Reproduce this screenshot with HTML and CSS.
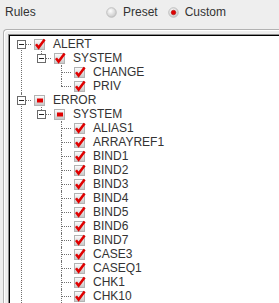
FILE: index.html
```html
<!DOCTYPE html>
<html lang="en">
<head>
  <meta charset="UTF-8" />
  <title>Rules</title>
  <link rel="stylesheet" href="styles.css">
</head>
<body>

  <svg class="defs" width="0" height="0">
    <defs>
      <linearGradient id="boxFill" x1="0" y1="0" x2="0" y2="1">
        <stop offset="0" stop-color="#fefefe"/>
        <stop offset="1" stop-color="#c6c6c6"/>
      </linearGradient>
      <radialGradient id="radioFill" cx="0.4" cy="0.35" r="0.7">
        <stop offset="0" stop-color="#ffffff"/>
        <stop offset="1" stop-color="#c4c4c4"/>
      </radialGradient>
      <symbol id="box" viewBox="0 0 12 12">
        <rect x="0.5" y="1.5" width="10" height="10" fill="url(#boxFill)" stroke="#b3b3b3"/>
      </symbol>
      <symbol id="chk" viewBox="0 0 12 12">
        <use href="#box"/>
        <path d="M2 6.2 L4.6 9.6 L10.6 1.6" fill="none" stroke="#e00000" stroke-width="2.5"/>
      </symbol>
      <symbol id="part" viewBox="0 0 12 12">
        <use href="#box"/>
        <rect x="3" y="4.5" width="6" height="4" fill="#e00000"/>
      </symbol>
      <symbol id="radio" viewBox="0 0 11 11">
        <circle cx="5.5" cy="5.5" r="4.8" fill="url(#radioFill)" stroke="#b8b8b8" stroke-width="0.8"/>
      </symbol>
      <symbol id="radioOn" viewBox="0 0 11 11">
        <use href="#radio"/>
        <circle cx="5.5" cy="5.5" r="2.3" fill="#e00000" stroke="#900" stroke-width="0.5"/>
      </symbol>
    </defs>
  </svg>

  <div class="header">
    <span class="title">Rules</span>
    <label class="radio"><svg><use href="#radio"/></svg>Preset</label>
    <label class="radio"><svg><use href="#radioOn"/></svg>Custom</label>
  </div>

  <div class="group">
    <div class="scroll">
      <ul class="tree">
        <li>
          <div class="row"><span class="handle"><span class="toggle"></span></span><svg class="cb"><use href="#chk"/></svg><span class="name">ALERT</span></div>
          <ul>
            <li>
              <div class="row"><span class="handle"><span class="toggle"></span></span><svg class="cb"><use href="#chk"/></svg><span class="name">SYSTEM</span></div>
              <ul>
                <li><div class="row"><span class="handle"></span><svg class="cb"><use href="#chk"/></svg><span class="name">CHANGE</span></div></li>
                <li><div class="row"><span class="handle"></span><svg class="cb"><use href="#chk"/></svg><span class="name">PRIV</span></div></li>
              </ul>
            </li>
          </ul>
        </li>
        <!-- more root nodes follow below the visible area -->
        <li class="more">
          <div class="row"><span class="handle"><span class="toggle"></span></span><svg class="cb"><use href="#part"/></svg><span class="name">ERROR</span></div>
          <ul>
            <li>
              <div class="row"><span class="handle"><span class="toggle"></span></span><svg class="cb"><use href="#part"/></svg><span class="name">SYSTEM</span></div>
              <ul>
                <li><div class="row"><span class="handle"></span><svg class="cb"><use href="#chk"/></svg><span class="name">ALIAS1</span></div></li>
                <li><div class="row"><span class="handle"></span><svg class="cb"><use href="#chk"/></svg><span class="name">ARRAYREF1</span></div></li>
                <li><div class="row"><span class="handle"></span><svg class="cb"><use href="#chk"/></svg><span class="name">BIND1</span></div></li>
                <li><div class="row"><span class="handle"></span><svg class="cb"><use href="#chk"/></svg><span class="name">BIND2</span></div></li>
                <li><div class="row"><span class="handle"></span><svg class="cb"><use href="#chk"/></svg><span class="name">BIND3</span></div></li>
                <li><div class="row"><span class="handle"></span><svg class="cb"><use href="#chk"/></svg><span class="name">BIND4</span></div></li>
                <li><div class="row"><span class="handle"></span><svg class="cb"><use href="#chk"/></svg><span class="name">BIND5</span></div></li>
                <li><div class="row"><span class="handle"></span><svg class="cb"><use href="#chk"/></svg><span class="name">BIND6</span></div></li>
                <li><div class="row"><span class="handle"></span><svg class="cb"><use href="#chk"/></svg><span class="name">BIND7</span></div></li>
                <li><div class="row"><span class="handle"></span><svg class="cb"><use href="#chk"/></svg><span class="name">CASE3</span></div></li>
                <li><div class="row"><span class="handle"></span><svg class="cb"><use href="#chk"/></svg><span class="name">CASEQ1</span></div></li>
                <li><div class="row"><span class="handle"></span><svg class="cb"><use href="#chk"/></svg><span class="name">CHK1</span></div></li>
                <li class="more"><div class="row"><span class="handle"></span><svg class="cb"><use href="#chk"/></svg><span class="name">CHK10</span></div></li>
              </ul>
            </li>
          </ul>
        </li>
      </ul>
    </div>
  </div>

</body>
</html>
```

FILE: styles.css
```css
html, body {
  overflow: hidden;
}
body {
  margin: 0;
  background-color: #eeeeee;
  font-family: "Liberation Sans", Arial, sans-serif;
  font-size: 12px;
  color: #333;
}
.defs {
  position: absolute;
}
.header {
  display: flex;
  align-items: center;
  height: 24px;
  padding-left: 5px;
}
.title {
  width: 101px;
}
.radio {
  display: flex;
  align-items: center;
  margin-right: 10px;
}
.radio svg {
  width: 11px;
  height: 11px;
  margin-right: 6px;
}
.group {
  margin: 5px -6px 0 3px;
  padding: 4px 0 0 4px;
  border: 1px solid #b2b2b2;
  border-bottom: none;
  border-right: none;
  border-radius: 4px 0 0 0;
  box-shadow: inset 1px 1px #fff;
}
.scroll {
  height: 267px;
  overflow: hidden;
  background-color: #fff;
  border-top: 1px solid #8e8e8e;
  border-left: 1px solid #8e8e8e;
  box-shadow: inset 1px 1px #000;
  padding: 2px 0 0 2px;
}
.tree, .tree ul {
  list-style: none;
  margin: 0;
  padding: 0;
}
.tree ul {
  padding-left: 20px;
}
.tree li {
  position: relative;
}
.tree li::before {
  content: "";
  position: absolute;
  left: 10px;
  top: 0;
  bottom: 0;
  border-left: 1px dotted #707070;
}
.tree li:last-child::before {
  bottom: auto;
  height: 7px;
}
.tree li.more::before {
  height: auto;
  bottom: 0;
}
.tree > li:first-child::before {
  top: 7px;
}
.row {
  display: flex;
  align-items: center;
  height: 14px;
  white-space: nowrap;
}
.handle {
  position: relative;
  flex: none;
  width: 20px;
  height: 14px;
}
.handle::before {
  content: "";
  position: absolute;
  left: 10px;
  top: 7px;
  width: 10px;
  border-top: 1px dotted #707070;
}
.toggle {
  position: absolute;
  left: 6px;
  top: 3px;
  width: 7px;
  height: 7px;
  border: 1px solid #6a6a6a;
  background-color: #fff;
}
.toggle::after {
  content: "";
  position: absolute;
  left: 1px;
  top: 3px;
  width: 5px;
  height: 1px;
  background-color: #222;
}
.cb {
  flex: none;
  width: 12px;
  height: 12px;
  margin-left: 3px;
}
.name {
  margin-left: 7px;
}
```
